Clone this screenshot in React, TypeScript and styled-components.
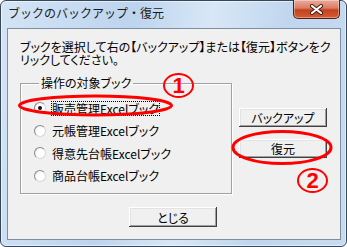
import React from "react"
import styled, { createGlobalStyle } from "styled-components"

const uiFont = `"Noto Sans CJK JP", "Liberation Sans", sans-serif`

const GlobalStyle = createGlobalStyle`
    body {
        margin: 0;
        background: #ffffff;
    }
`

const Stage = styled.div`
    position: relative;
    width: 347px;
    height: 247px;
    font-family: ${uiFont};
`

const Window = styled.div`
    box-sizing: border-box;
    width: 347px;
    height: 247px;
    display: flex;
    flex-direction: column;
    padding: 0 5px 6px 6px;
    border: 1px solid #36475c;
    border-radius: 6px;
    background: linear-gradient(100deg, #d4e4f5 0%, #bdd4ee 35%, #d8e7f6 55%, #c0d6ee 75%, #c8dbf0 100%);
    box-shadow: inset 0 0 0 1px rgba(255, 255, 255, 0.55);
`

const TitleBar = styled.div`
    flex: none;
    height: 27px;
    display: flex;
    justify-content: space-between;
    align-items: flex-start;
`

const Title = styled.span`
    margin-left: 1px;
    font-size: 12px;
    line-height: 24px;
    color: #1b1b1b;
`

const CloseButton = styled.div`
    box-sizing: border-box;
    width: 47px;
    height: 19px;
    margin: -1px 1px 0 0;
    border: 1px solid #4d2018;
    border-top: none;
    border-radius: 0 0 5px 5px;
    background: linear-gradient(#eaab9e 0%, #da7c62 45%, #c3411f 55%, #d65c34 100%);
    box-shadow: inset 0 0 0 1px rgba(255, 255, 255, 0.35);
    display: flex;
    align-items: center;
    justify-content: center;
`

const Client = styled.div`
    flex: 1;
    box-sizing: border-box;
    display: flex;
    flex-direction: column;
    padding: 11px 12px 0 12px;
    border: 1px solid #7f8fa3;
    background: #f0f0f0;
    font-size: 12px;
    color: #000;
`

const Message = styled.p`
    margin: 0;
    line-height: 13px;
    white-space: nowrap;
    font-feature-settings: "palt";
`

const MainRow = styled.div`
    display: flex;
    align-items: flex-start;
    margin-top: 10px;
`

const GroupBox = styled.fieldset`
    box-sizing: border-box;
    width: 212px;
    height: 118px;
    margin: 0;
    padding: 7px 0 0 13px;
    border: 1px solid #a0a0a0;
    box-shadow: 1px 1px 0 #ffffff, inset 1px 1px 0 #ffffff;
`

const Legend = styled.legend`
    margin-left: 5px;
    padding: 0 2px;
    font-size: 12px;
    line-height: 14px;
    font-feature-settings: "palt";
`

const Option = styled.div`
    height: 22.5px;
    display: flex;
    align-items: center;
`

const Radio = styled.span<{ $checked?: boolean }>`
    box-sizing: border-box;
    flex: none;
    width: 12px;
    height: 12px;
    border-radius: 50%;
    border: 1px solid;
    border-color: #8a8a8a #d8d8d8 #d8d8d8 #8a8a8a;
    background: radial-gradient(circle at 60% 60%, #ffffff 40%, #e6e6e6 100%);
    display: flex;
    align-items: center;
    justify-content: center;
    &::after {
        content: "";
        width: 4px;
        height: 4px;
        border-radius: 50%;
        background: ${p => (p.$checked ? "#111" : "transparent")};
    }
`

const OptionLabel = styled.span<{ $focused?: boolean }>`
    margin-left: 5px;
    border: 1px dotted ${p => (p.$focused ? "#000" : "transparent")};
    line-height: 13px;
    white-space: nowrap;
    font-feature-settings: "palt";
`

const ButtonColumn = styled.div`
    display: flex;
    flex-direction: column;
    gap: 12px;
    margin-left: 7px;
    padding-top: 32px;
`

const Button = styled.button<{ $tall?: boolean }>`
    box-sizing: border-box;
    width: 88px;
    height: ${p => (p.$tall ? 20 : 19)}px;
    padding: 0;
    border: none;
    background: #f0f0f0;
    box-shadow: inset -1px -1px 0 #404040, inset 1px 1px 0 #ffffff, inset -2px -2px 0 #a0a0a0,
        inset 2px 2px 0 #e3e3e3;
    font-family: ${uiFont};
    font-size: 12px;
    color: #000;
    font-feature-settings: "palt";
`

const CloseRow = styled.div`
    display: flex;
    justify-content: center;
    margin-top: 13px;
    padding-right: 2px;
`

const Marks = styled.svg`
    position: absolute;
    left: 0;
    top: 0;
    pointer-events: none;
`

const Circled = styled.span<{ $x: number; $y: number }>`
    position: absolute;
    left: ${p => p.$x}px;
    top: ${p => p.$y}px;
    box-sizing: border-box;
    width: 31px;
    height: 25px;
    border: 2.5px solid #ff0000;
    border-radius: 50%;
    display: flex;
    align-items: center;
    justify-content: center;
    font: bold 22px/1 "Liberation Sans", sans-serif;
    color: #ff0000;
`

const books = ["販売管理Excelブック", "元帳管理Excelブック", "得意先台帳Excelブック", "商品台帳Excelブック"]

export default function App() {
    return (
        <Stage>
            <GlobalStyle />
            <Window>
                <TitleBar>
                    <Title>ブックのバックアップ・復元</Title>
                    <CloseButton>
                        <svg width="13" height="11" viewBox="0 0 13 11">
                            <path d="M2 2 L11 9 M11 2 L2 9" stroke="#3a1a14" strokeWidth="4" strokeLinecap="round" />
                            <path d="M2 2 L11 9 M11 2 L2 9" stroke="#ffffff" strokeWidth="2.2" strokeLinecap="round" />
                        </svg>
                    </CloseButton>
                </TitleBar>
                <Client>
                    <Message>
                        ブックを選択して右の【バックアップ】または【復元】ボタンをク<br />
                        リックしてください。
                    </Message>
                    <MainRow>
                        <GroupBox>
                            <Legend>操作の対象ブック</Legend>
                            {books.map((name, i) => (
                                <Option key={name}>
                                    <Radio $checked={i === 0} />
                                    <OptionLabel $focused={i === 0}>{name}</OptionLabel>
                                </Option>
                            ))}
                        </GroupBox>
                        <ButtonColumn>
                            <Button>バックアップ</Button>
                            <Button>復元</Button>
                        </ButtonColumn>
                    </MainRow>
                    <CloseRow>
                        <Button $tall>とじる</Button>
                    </CloseRow>
                </Client>
            </Window>

            {/* red annotations drawn over the dialog */}
            <Marks width="347" height="247" viewBox="0 0 347 247">
                <ellipse cx="95.5" cy="105.5" rx="76" ry="9.5" fill="none" stroke="#ff0000" strokeWidth="3" />
                <ellipse cx="282" cy="147.5" rx="49" ry="16" fill="none" stroke="#ff0000" strokeWidth="3" />
            </Marks>
            <Circled $x={163} $y={73}>1</Circled>
            <Circled $x={297} $y={168}>2</Circled>
        </Stage>
    )
}
